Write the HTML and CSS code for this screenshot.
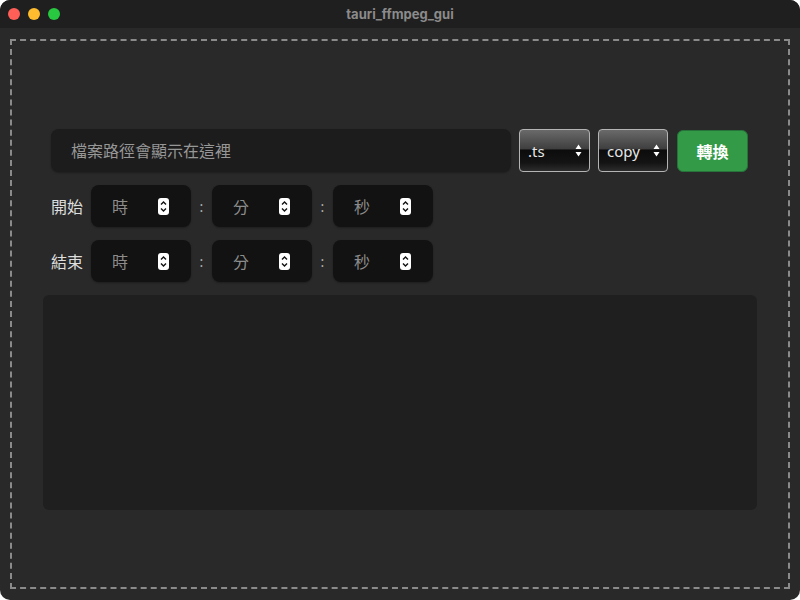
FILE: index.html
```html
<!DOCTYPE html>
<html lang="zh-Hant">
<head>
    <meta charset="UTF-8">
    <title>tauri_ffmpeg_gui</title>
    <link rel="stylesheet" href="styles.css">
</head>
<body>
    <div class="window">
        <div class="titlebar">
            <div class="lights">
                <span class="light red"></span>
                <span class="light yellow"></span>
                <span class="light green"></span>
            </div>
            <div class="title">tauri_ffmpeg_gui</div>
            <div></div>
        </div>
        <div class="content">
            <div class="frame">
                <div class="row top-row">
                    <div class="path">檔案路徑會顯示在這裡</div>
                    <div class="select sel-ext">
                        <span>.ts</span>
                        <svg width="7" height="13" viewBox="0 0 7 13"><path d="M3.5 0.5 L6.5 5 L0.5 5 Z M0.5 8 L6.5 8 L3.5 12.5 Z" fill="#fff"/></svg>
                    </div>
                    <div class="select sel-codec">
                        <span>copy</span>
                        <svg width="7" height="13" viewBox="0 0 7 13"><path d="M3.5 0.5 L6.5 5 L0.5 5 Z M0.5 8 L6.5 8 L3.5 12.5 Z" fill="#fff"/></svg>
                    </div>
                    <button class="convert">轉換</button>
                </div>

                <div class="row time-row">
                    <span class="label">開始</span>
                    <div class="num"><span>時</span><svg class="spin" width="11" height="17" viewBox="0 0 11 17"><rect x="0" y="0" width="11" height="17" rx="3" fill="#fff"/><path d="M3 6.5 L5.5 4 L8 6.5 M3 10.5 L5.5 13 L8 10.5" stroke="#111" stroke-width="1.4" fill="none"/></svg></div>
                    <span class="colon">:</span>
                    <div class="num"><span>分</span><svg class="spin" width="11" height="17" viewBox="0 0 11 17"><rect x="0" y="0" width="11" height="17" rx="3" fill="#fff"/><path d="M3 6.5 L5.5 4 L8 6.5 M3 10.5 L5.5 13 L8 10.5" stroke="#111" stroke-width="1.4" fill="none"/></svg></div>
                    <span class="colon">:</span>
                    <div class="num"><span>秒</span><svg class="spin" width="11" height="17" viewBox="0 0 11 17"><rect x="0" y="0" width="11" height="17" rx="3" fill="#fff"/><path d="M3 6.5 L5.5 4 L8 6.5 M3 10.5 L5.5 13 L8 10.5" stroke="#111" stroke-width="1.4" fill="none"/></svg></div>
                </div>

                <div class="row time-row">
                    <span class="label">結束</span>
                    <div class="num"><span>時</span><svg class="spin" width="11" height="17" viewBox="0 0 11 17"><rect x="0" y="0" width="11" height="17" rx="3" fill="#fff"/><path d="M3 6.5 L5.5 4 L8 6.5 M3 10.5 L5.5 13 L8 10.5" stroke="#111" stroke-width="1.4" fill="none"/></svg></div>
                    <span class="colon">:</span>
                    <div class="num"><span>分</span><svg class="spin" width="11" height="17" viewBox="0 0 11 17"><rect x="0" y="0" width="11" height="17" rx="3" fill="#fff"/><path d="M3 6.5 L5.5 4 L8 6.5 M3 10.5 L5.5 13 L8 10.5" stroke="#111" stroke-width="1.4" fill="none"/></svg></div>
                    <span class="colon">:</span>
                    <div class="num"><span>秒</span><svg class="spin" width="11" height="17" viewBox="0 0 11 17"><rect x="0" y="0" width="11" height="17" rx="3" fill="#fff"/><path d="M3 6.5 L5.5 4 L8 6.5 M3 10.5 L5.5 13 L8 10.5" stroke="#111" stroke-width="1.4" fill="none"/></svg></div>
                </div>

                <div class="log"></div>
            </div>
        </div>
    </div>
</body>
</html>
```

FILE: styles.css
```css
* {
    margin: 0;
    padding: 0;
    box-sizing: border-box;
}
body {
    background: #ffffff;
    font-family: "Noto Sans", "Noto Sans CJK TC", sans-serif;
}
.window {
    width: 800px;
    height: 600px;
    border-radius: 10px;
    overflow: hidden;
    background: #292929;
    display: flex;
    flex-direction: column;
}

/* 標題列 */
.titlebar {
    height: 28px;
    background: #1f1f1f;
    display: grid;
    grid-template-columns: 1fr auto 1fr;
    align-items: center;
}
.lights {
    display: flex;
    gap: 8px;
    padding-left: 8px;
}
.light {
    width: 12px;
    height: 12px;
    border-radius: 50%;
}
.red { background: #ff5f57; }
.yellow { background: #febc2e; }
.green { background: #28c840; }
.title {
    font-family: "Inter", "Noto Sans", sans-serif;
    font-size: 13px;
    font-weight: 700;
    color: #8b8b8b;
}

/* 內容 */
.content {
    flex: 1;
    padding: 11px 10px;
}
.frame {
    height: 100%;
    border: 2px dashed #8a8a8a;
    padding: 88px 31px 0 31px;
    display: flex;
    flex-direction: column;
    gap: 13px;
}
.row {
    display: flex;
    align-items: center;
    padding: 0 9px 0 8px;
}
.top-row {
    gap: 8px;
    height: 43px;
}
.path {
    width: 460px;
    height: 43px;
    background: #1c1c1c;
    border-radius: 8px;
    color: #979797;
    font-family: "Noto Sans CJK TC", sans-serif;
    font-size: 16px;
    line-height: 43px;
    padding-left: 20px;
    box-shadow: 0 1px 2px rgba(0, 0, 0, 0.3);
}
.select {
    width: 71px;
    height: 43px;
    border: 1px solid #b4b4b4;
    border-radius: 4px;
    background: linear-gradient(to bottom, #6a6a6a 0%, #3e3e3e 47%, #0c0c0c 48%, #141414 80%, #2c2c2c 100%);
    display: flex;
    align-items: center;
    justify-content: space-between;
    padding: 0 7px 0 8px;
    color: #e6e6e6;
    font-size: 15px;
}
.sel-codec {
    width: 70px;
}
.convert {
    margin-left: 1px;
    width: 71px;
    height: 42px;
    background: #339a47;
    border: 1px solid #26743a;
    border-radius: 6px;
    color: #ffffff;
    font-family: "Noto Sans CJK TC", sans-serif;
    font-size: 16px;
    font-weight: 700;
}

.time-row {
    height: 42px;
}
.label {
    width: 40px;
    color: #dedede;
    font-family: "Noto Sans CJK TC", sans-serif;
    font-size: 16px;
}
.num {
    width: 100px;
    height: 42px;
    background: #121212;
    border-radius: 8px;
    display: flex;
    align-items: center;
    justify-content: space-between;
    padding: 0 22px 0 21px;
    color: #8c8c8c;
    font-family: "Noto Sans CJK TC", sans-serif;
    font-size: 16px;
    box-shadow: 0 1px 2px rgba(0, 0, 0, 0.3);
}
.colon {
    width: 21px;
    text-align: center;
    color: #b0b0b0;
    font-size: 14px;
}

.log {
    height: 215px;
    margin-top: 0;
    background: #1f1f1f;
    border-radius: 6px;
}
```
